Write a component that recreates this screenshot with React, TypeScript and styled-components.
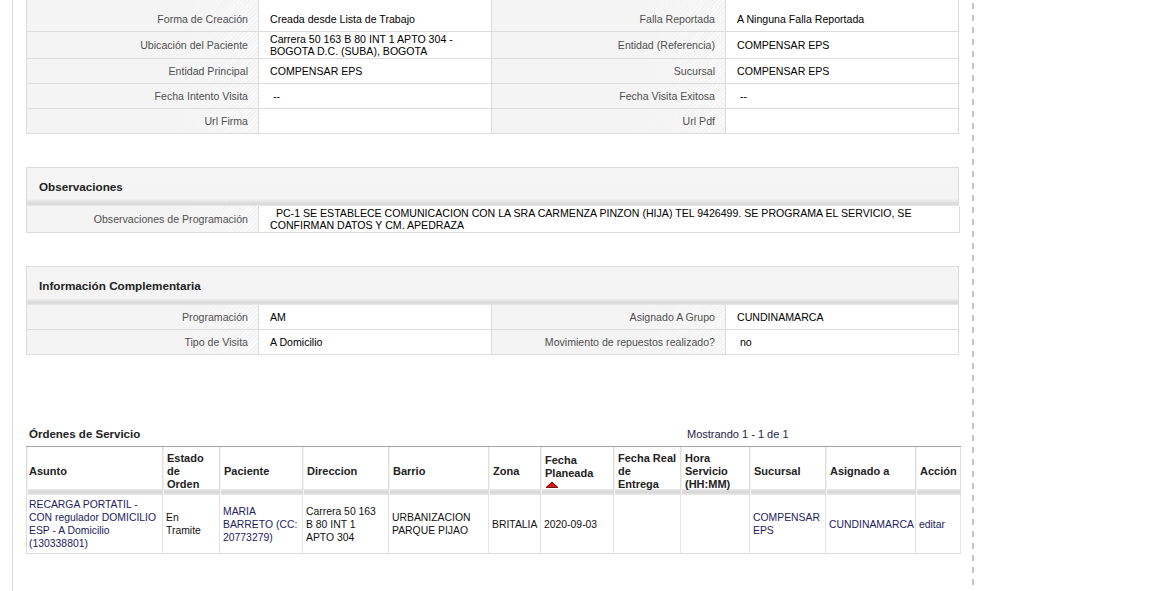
import React from 'react';
import styled, { createGlobalStyle } from 'styled-components';

const GlobalStyle = createGlobalStyle`
  html, body { margin: 0; padding: 0; background: #fff; }
  body { font-family: "Liberation Sans", Arial, sans-serif; }
  * { box-sizing: border-box; }
`;

const FONT = `"Liberation Sans", Arial, sans-serif`;
const LINE = '#dcdcdc';

const Page = styled.div`
  margin-left: 12px;
  width: 962px;
  min-height: 591px;
  border-left: 1px solid #dcdcdc;
  padding-left: 13px;
  font-family: ${FONT};
  background-image: linear-gradient(to bottom, #c6c6c6 0, #c6c6c6 6px, transparent 6px, transparent 12px);
  background-size: 2px 12px;
  background-position: right 3px;
  background-repeat: repeat-y;
`;

const Grid = styled.div`
  width: 933px;
  border-left: 1px solid ${LINE};
`;

const Row = styled.div<{ $h: number; $cols: string }>`
  display: grid;
  grid-template-columns: ${(p) => p.$cols};
  height: ${(p) => p.$h}px;
`;

const LabelCell = styled.div`
  display: flex;
  align-items: center;
  justify-content: flex-end;
  padding-right: 10px;
  font-size: 10.6px;
  line-height: 12px;
  color: #505050;
  text-align: right;
  border-right: 1px solid ${LINE};
  border-bottom: 1px solid ${LINE};
  background:
    linear-gradient(to right, #f4f4f4 0, rgba(244, 244, 244, 0) 100%) right / 90px 100% no-repeat,
    repeating-linear-gradient(-45deg, rgba(255, 255, 255, 0.7) 0 1px, rgba(255, 255, 255, 0) 1px 3px) right / 90px 100% no-repeat,
    #f4f4f4;
`;

const ValueCell = styled.div`
  display: flex;
  flex-direction: column;
  justify-content: center;
  padding: 0 6px 0 11px;
  font-size: 10.6px;
  line-height: 12px;
  color: #000;
  white-space: pre;
  background: #fff;
  border-right: 1px solid ${LINE};
  border-bottom: 1px solid ${LINE};
`;

const Section = styled.section`
  width: 933px;
  margin-top: 33px;
  border-left: 1px solid ${LINE};
`;

const SectionTitle = styled.h3`
  margin: 0;
  height: 39px;
  display: flex;
  align-items: center;
  padding: 0 0 2px 12px;
  font-size: 11.7px;
  font-weight: bold;
  color: #222;
  border-top: 1px solid ${LINE};
  border-right: 1px solid ${LINE};
  background: linear-gradient(
    to bottom,
    #f5f5f5 0,
    #f4f4f4 31px,
    #ececec 32px,
    #d8d8d8 36px,
    #e9e9e9 38px
  );
`;

const OrdersBar = styled.div`
  display: grid;
  grid-template-columns: 661px 1fr;
  align-items: end;
  height: 20px;
  margin-top: 71px;
  padding-bottom: 5px;
  width: 935px;
`;

const OrdersTitle = styled.h2`
  margin: 0;
  padding-left: 3px;
  font-size: 11.5px;
  line-height: 14px;
  font-weight: bold;
  color: #222;
`;

const Paging = styled.span`
  font-size: 11px;
  line-height: 14px;
  color: #1d1d4a;
`;

const Table = styled.table`
  width: 935px;
  table-layout: fixed;
  border-collapse: separate;
  border-spacing: 0;
  border-top: 1px solid #a2a2a2;
  font-family: ${FONT};
`;

const Th = styled.th<{ $w: number }>`
  width: ${(p) => p.$w}px;
  height: 48px;
  padding: 0 1px 0 4px;
  vertical-align: middle;
  text-align: left;
  font-size: 11px;
  line-height: 13px;
  font-weight: bold;
  color: #222;
  white-space: nowrap;
  border-right: 1px solid #dedede;
  box-shadow: inset 1px 0 0 #f2f2f2;
  background: linear-gradient(
    to bottom,
    #fff 0,
    #fff 42px,
    #e8e8e8 42px,
    #d6d6d6 45px,
    #dadada 46px,
    #ececec 48px
  );
  &:first-child {
    border-left: 1px solid #dedede;
    padding-left: 2px;
  }
`;

const Td = styled.td<{ $link?: boolean }>`
  height: 59px;
  padding: 0 1px 0 3px;
  vertical-align: middle;
  font-size: 10.4px;
  line-height: 13px;
  color: ${(p) => (p.$link ? '#1c2260' : '#111')};
  white-space: nowrap;
  border-right: 1px solid #e4e4e4;
  border-bottom: 1px solid #dcdcdc;
  &:first-child {
    border-left: 1px solid #dedede;
    padding-left: 2px;
  }
`;

const Line = styled.span`
  display: block;
`;

const SortArrow = styled.svg`
  display: block;
  margin-top: 1px;
`;

type Pair = { label: string; value: string[] };

const TOP_COLS = '232px 233px 234px 233px';

const topRows: { h: number; cells: Pair[] }[] = [
  { h: 7, cells: [{ label: '', value: [''] }, { label: '', value: [''] }] },
  {
    h: 25,
    cells: [
      { label: 'Forma de Creación', value: ['Creada desde Lista de Trabajo'] },
      { label: 'Falla Reportada', value: ['A Ninguna Falla Reportada'] },
    ],
  },
  {
    h: 27,
    cells: [
      {
        label: 'Ubicación del Paciente',
        value: ['Carrera 50 163 B 80 INT 1 APTO 304 -', 'BOGOTA D.C. (SUBA), BOGOTA'],
      },
      { label: 'Entidad (Referencia)', value: ['COMPENSAR EPS'] },
    ],
  },
  {
    h: 25,
    cells: [
      { label: 'Entidad Principal', value: ['COMPENSAR EPS'] },
      { label: 'Sucursal', value: ['COMPENSAR EPS'] },
    ],
  },
  {
    h: 25,
    cells: [
      { label: 'Fecha Intento Visita', value: [' --'] },
      { label: 'Fecha Visita Exitosa', value: [' --'] },
    ],
  },
  {
    h: 25,
    cells: [
      { label: 'Url Firma', value: [''] },
      { label: 'Url Pdf', value: [''] },
    ],
  },
];

const infoRows: { h: number; cells: Pair[] }[] = [
  {
    h: 25,
    cells: [
      { label: 'Programación', value: ['AM'] },
      { label: 'Asignado A Grupo', value: ['CUNDINAMARCA'] },
    ],
  },
  {
    h: 25,
    cells: [
      { label: 'Tipo de Visita', value: ['A Domicilio'] },
      { label: 'Movimiento de repuestos realizado?', value: [' no'] },
    ],
  },
];

type Col = { w: number; head: string[]; sort?: boolean };

const columns: Col[] = [
  { w: 137, head: ['Asunto'] },
  { w: 57, head: ['Estado', 'de', 'Orden'] },
  { w: 83, head: ['Paciente'] },
  { w: 86, head: ['Direccion'] },
  { w: 100, head: ['Barrio'] },
  { w: 52, head: ['Zona'] },
  { w: 73, head: ['Fecha', 'Planeada'], sort: true },
  { w: 67, head: ['Fecha Real', 'de', 'Entrega'] },
  { w: 69, head: ['Hora', 'Servicio', '(HH:MM)'] },
  { w: 76, head: ['Sucursal'] },
  { w: 90, head: ['Asignado a'] },
  { w: 45, head: ['Acción'] },
];

const orderRow: { lines: string[]; link?: boolean }[] = [
  { lines: ['RECARGA PORTATIL -', 'CON regulador DOMICILIO', 'ESP - A Domicilio', '(130338801)'], link: true },
  { lines: ['En', 'Tramite'] },
  { lines: ['MARIA', 'BARRETO (CC:', '20773279)'], link: true },
  { lines: ['Carrera 50 163', 'B 80 INT 1', 'APTO 304'] },
  { lines: ['URBANIZACION', 'PARQUE PIJAO'] },
  { lines: ['BRITALIA'] },
  { lines: ['2020-09-03'] },
  { lines: [] },
  { lines: [] },
  { lines: ['COMPENSAR', 'EPS'], link: true },
  { lines: ['CUNDINAMARCA'], link: true },
  { lines: ['editar'], link: true },
];

const Lines: React.FC<{ lines: string[] }> = ({ lines }) => (
  <>
    {lines.map((l, i) => (
      <Line key={i}>{l || '\u00a0'}</Line>
    ))}
  </>
);

const PairRow: React.FC<{ h: number; cells: Pair[] }> = ({ h, cells }) => (
  <Row $h={h} $cols={TOP_COLS}>
    {cells.map((c, i) => (
      <React.Fragment key={i}>
        <LabelCell>{c.label}</LabelCell>
        <ValueCell>
          <Lines lines={c.value} />
        </ValueCell>
      </React.Fragment>
    ))}
  </Row>
);

export default function App() {
  return (
    <>
      <GlobalStyle />
      <Page>
        <Grid>
          {topRows.map((r, i) => (
            <PairRow key={i} h={r.h} cells={r.cells} />
          ))}
        </Grid>

        <Section>
          <SectionTitle>Observaciones</SectionTitle>
          <Row $h={27} $cols="232px 701px">
            <LabelCell>Observaciones de Programación</LabelCell>
            <ValueCell>
              <Lines
                lines={[
                  '  PC-1 SE ESTABLECE COMUNICACION CON LA SRA CARMENZA PINZON (HIJA) TEL 9426499. SE PROGRAMA EL SERVICIO, SE',
                  'CONFIRMAN DATOS Y CM. APEDRAZA',
                ]}
              />
            </ValueCell>
          </Row>
        </Section>

        <Section>
          <SectionTitle>Información Complementaria</SectionTitle>
          {infoRows.map((r, i) => (
            <PairRow key={i} h={r.h} cells={r.cells} />
          ))}
        </Section>

        <OrdersBar>
          <OrdersTitle>Órdenes de Servicio</OrdersTitle>
          <Paging>Mostrando 1 - 1 de 1</Paging>
        </OrdersBar>
        <Table>
          <thead>
            <tr>
              {columns.map((c, i) => (
                <Th key={i} $w={c.w}>
                  <Lines lines={c.head} />
                  {c.sort && (
                    <SortArrow width="14" height="7" viewBox="0 0 14 7">
                      <polygon points="1,6.5 7,1 13,6.5" fill="#d21414" stroke="#7a0d0d" strokeWidth="1" />
                    </SortArrow>
                  )}
                </Th>
              ))}
            </tr>
          </thead>
          <tbody>
            <tr>
              {orderRow.map((c, i) => (
                <Td key={i} $link={c.link}>
                  {c.lines.length > 0 && <Lines lines={c.lines} />}
                </Td>
              ))}
            </tr>
          </tbody>
        </Table>
      </Page>
    </>
  );
}
